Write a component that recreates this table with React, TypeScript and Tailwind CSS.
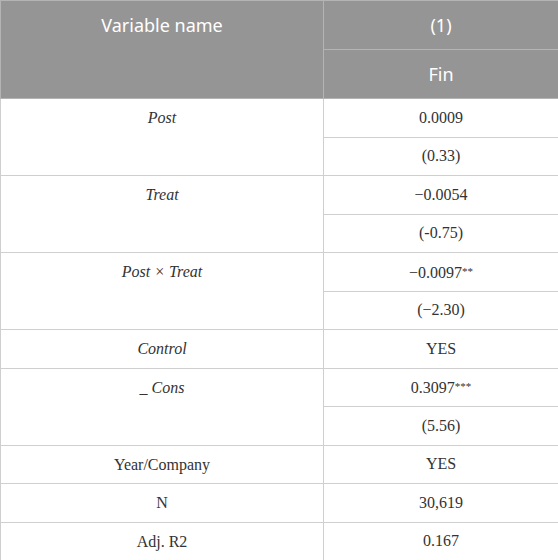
import React from "react";

type Row = { label: string; italic: boolean; values: React.ReactNode[] };

const rows: Row[] = [
  { label: "Post", italic: true, values: ["0.0009", "(0.33)"] },
  { label: "Treat", italic: true, values: ["\u22120.0054", "(-0.75)"] },
  {
    label: "Post \u00d7 Treat",
    italic: true,
    values: [
      <span key="a">
        {"\u22120.0097"}
        <span className="text-[11px] align-[3px]">**</span>
      </span>,
      "(\u22122.30)",
    ],
  },
  { label: "Control", italic: true, values: ["YES"] },
  {
    label: "_ Cons",
    italic: true,
    values: [
      <span key="b">
        0.3097<span className="text-[11px] align-[3px]">***</span>
      </span>,
      "(5.56)",
    ],
  },
  { label: "Year/Company", italic: false, values: ["YES"] },
  { label: "N", italic: false, values: ["30,619"] },
  { label: "Adj. R2", italic: false, values: ["0.167"] },
];

export default function App() {
  return (
    <div className="w-[558px] h-[560px] bg-white overflow-hidden">
      <table className="w-[558px] table-fixed border-collapse">
        <colgroup>
          <col className="w-[323px]" />
          <col className="w-[235px]" />
        </colgroup>
        <thead className="font-['Noto_Sans',sans-serif]">
          <tr className="h-[49px]">
            <th
              rowSpan={2}
              className="bg-[#959595] border border-[#b4b4b4] align-top pt-[11px] font-normal text-white text-[18px] leading-[26px]"
            >
              Variable name
            </th>
            <th className="bg-[#959595] border border-[#b4b4b4] font-normal text-white text-[18px] leading-[26px]">
              (1)
            </th>
          </tr>
          <tr className="h-[49px]">
            <th className="bg-[#959595] border border-[#b4b4b4] font-normal text-white text-[18px] leading-[26px]">
              Fin
            </th>
          </tr>
        </thead>
        <tbody className="font-['Liberation_Serif',serif] text-[16px] text-[#333]">
          {rows.map((r, i) =>
            r.values.map((v, j) => (
              <tr key={`${i}-${j}`} className="h-[38.5px]">
                {j === 0 && (
                  <td
                    rowSpan={r.values.length}
                    className={`border border-[#cfcfcf] align-top text-center pt-[8px] leading-[22px] ${
                      r.italic ? "italic" : ""
                    }`}
                  >
                    {r.label}
                  </td>
                )}
                <td className="border border-[#cfcfcf] text-center leading-[22px]">{v}</td>
              </tr>
            ))
          )}
        </tbody>
      </table>
    </div>
  );
}
